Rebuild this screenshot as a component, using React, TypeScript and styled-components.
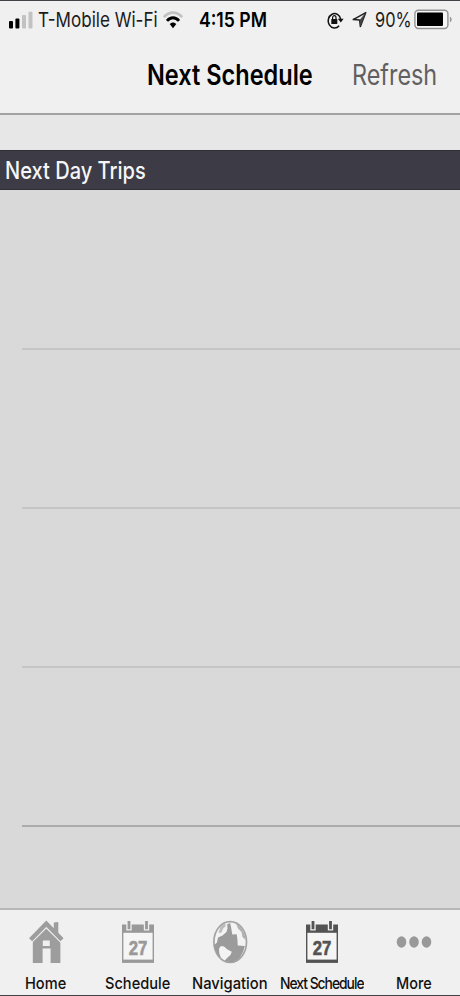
import React from 'react';
import styled, { createGlobalStyle } from 'styled-components';

const GlobalStyle = createGlobalStyle`
  * { box-sizing: border-box; }
  body { margin: 0; background: #efefef; font-family: Inter, "Noto Sans", sans-serif; color: #000; }
`;

const Screen = styled.div`
  display: flex;
  flex-direction: column;
  width: 460px;
  height: 996px;
  overflow: hidden;
  background: #f0f0f0;
  border-top: 1px solid #434145;
  border-bottom: 1px solid #434145;
`;

/* Reserves the condensed width so neighbours line up with the scaled glyphs. */
const TextSlot = styled.div<{ $width: number }>`
  flex: none;
  width: ${(p) => p.$width}px;
`;

const Condensed = styled.span<{
  $size: number;
  $scale: number;
  $weight?: number;
  $color?: string;
  $spacing?: number;
}>`
  display: block;
  width: max-content;
  margin: 0;
  white-space: nowrap;
  transform: scaleX(${(p) => p.$scale});
  transform-origin: 0 50%;
  font-size: ${(p) => p.$size}px;
  line-height: ${(p) => Math.round(p.$size * 1.2)}px;
  font-weight: ${(p) => p.$weight ?? 400};
  color: ${(p) => p.$color ?? '#000'};
  letter-spacing: ${(p) => p.$spacing ?? 0}px;
`;

const StatusBar = styled.div`
  display: flex;
  align-items: center;
  height: 37px;
  padding: 0 8px 0 9px;
`;

const StatusGroup = styled.div`
  display: flex;
  align-items: center;
  svg { display: block; flex: none; }
`;

const Carrier = styled(StatusGroup)`gap: 5px;`;

const Indicators = styled(StatusGroup)`
  gap: 8px;
  margin-left: auto;
  svg:last-child { margin-left: -4px; }
`;

const Clock = styled.div`margin-left: 16px;`;

const NavBar = styled.header`
  display: flex;
  align-items: center;
  justify-content: flex-end;
  gap: 38px;
  height: 77px;
  padding: 0 22px 2px 0;
  border-bottom: 2px solid #a2a2a2;
`;

const Spacer = styled.div`
  height: 35px;
  background: #e7e7e7;
`;

const SectionHeader = styled.div`
  display: flex;
  align-items: center;
  height: 40px;
  padding-left: 5px;
  background: #3d3b46;
  border-top: 1px solid #2f2d36;
  border-bottom: 1px solid #302e38;
`;

const List = styled.div`
  flex: 1;
  min-height: 0;
  overflow: hidden;
  padding-top: 1px;
  background: #d9d9d9;
`;

const Row = styled.div<{ $strong?: boolean }>`
  height: 159px;
  margin-left: 22px;
  border-bottom: 2px solid ${(p) => (p.$strong ? '#acacac' : '#c5c5c5')};
`;

const TabBar = styled.nav`
  display: grid;
  grid-template-columns: repeat(5, 92px);
  height: 87px;
  border-top: 2px solid #b7b7b7;
`;

const Tab = styled.div`
  display: flex;
  flex-direction: column;
  align-items: center;
  padding-top: 10px;
  svg { display: block; }
`;

const TabLabel = styled.div`margin: 9px 1px 0 0;`;

const SignalIcon = () => (
  <svg width="24" height="18" viewBox="0 0 24 18">
    <rect x="0" y="10" width="4" height="7.5" rx="1" />
    <rect x="6.4" y="7.5" width="4" height="10" rx="1" />
    <rect x="13" y="4" width="4" height="13.5" rx="1" fill="#c2c2c2" />
    <rect x="19.5" y="0.8" width="4" height="16.7" rx="1" fill="#c2c2c2" />
  </svg>
);

const WifiIcon = () => (
  <svg width="20" height="18" viewBox="0 0 20 18" fill="none">
    <path d="M.9 6.2C6 .2 14 .2 19.1 6.2" stroke="#c2c2c2" strokeWidth="2.8" />
    <path d="M4 9.8C7.4 5.7 12.6 5.7 16 9.8" stroke="#000" strokeWidth="2.8" />
    <path d="M6.7 13.1C8.6 10.8 11.4 10.8 13.3 13.1L10 17.3z" fill="#000" />
  </svg>
);

const RotationLockIcon = () => (
  <svg width="17" height="18" viewBox="0 0 17 18" fill="none">
    <path d="M12.1 14.8A6.3 7.2 0 1 1 13.7 8.4" stroke="#111" strokeWidth="1.5" />
    <path d="M10.8 7.7H16.6L13.8 11.5z" fill="#111" />
    <rect x="4.3" y="8" width="6" height="5" rx=".6" fill="#111" />
    <path d="M5.6 8V6.7a1.7 2 0 0 1 3.4 0V8" stroke="#111" strokeWidth="1.2" />
  </svg>
);

const LocationIcon = () => (
  <svg width="15" height="17" viewBox="0 0 15 17" fill="none">
    <path d="M13.8 1.6L1.2 8.6L7.6 8.9L8.4 15.6z" stroke="#222" strokeWidth="1.5" strokeLinejoin="round" />
    <path d="M13.8 1.6L7.6 8.9L8.4 15.6z" fill="#444" />
  </svg>
);

const BatteryIcon = () => (
  <svg width="38" height="21" viewBox="0 0 38 21">
    <rect x=".9" y="1.2" width="33" height="18.3" rx="3.5" fill="#f7f7f7" stroke="#929292" strokeWidth="1.4" />
    <rect x="3" y="3.6" width="26" height="13.5" rx="1" />
    <path d="M35.9 7.5q1.8 1 1.8 3t-1.8 3z" fill="#999" />
  </svg>
);

const HomeIcon = () => (
  <svg width="36" height="44" viewBox="0 0 36 44">
    <path d="M25.8 2.6L30.3 2V19H25.8z" fill="#9d9d9d" />
    <path d="M18.3 7L32.4 21V43H22.6V28.5H14.6V43H4.8V21z" fill="#9d9d9d" />
    <path d="M2.4 21L18.3 5.2L34.2 21" fill="none" stroke="#f0f0f0" strokeWidth="4.8" />
    <path d="M2.6 19.8L18.3 3.6L34 19.8" fill="none" stroke="#9d9d9d" strokeWidth="4.4" />
    <path d="M14.8 20.5H21.8V26H14.8z" fill="#f0f0f0" />
  </svg>
);

const CalendarIcon = ({ color }: { color: string }) => (
  <svg width="34" height="44" viewBox="0 0 34 44">
    <path d="M1.7 10V42H32.3V10" fill="#f5f5f5" stroke={color} strokeWidth="1.4" />
    <path d="M1 4.5H33V12.8H1z" fill={color} />
    <path d="M1 39.6H33V42.6H1z" fill={color} />
    <path d="M8 0V10.4M25.5 0V10.4" stroke="#f0f0f0" strokeWidth="5.4" />
    <path d="M8 1V9.2M25.5 1V9.2" stroke={color} strokeWidth="2.8" />
    <text x="7.8" y="34.6" fontSize="20" fontWeight="700" fontFamily="Liberation Sans, sans-serif" textLength="18.6" lengthAdjust="spacingAndGlyphs" fill={color} stroke={color} strokeWidth=".6">27</text>
  </svg>
);

const GlobeIcon = () => (
  <svg width="36" height="44" viewBox="0 0 36 44">
    <ellipse cx="18.2" cy="22" rx="16.3" ry="20.4" fill="#f3f3f3" stroke="#a4a4a4" strokeWidth="1.7" />
    <path d="M15.2 4.2L18.2 3L19.2 8L20.3 14.5L24.7 14.3L25.4 19L25.7 25.5L32.8 26Q31.5 33 28 37.5Q23 42.5 18 42.3L12.5 40.8L15.5 37.5L18.5 35L19.8 31.7L15.5 29.5L12 26.5L9 26L7 28.5L7.2 33L9 38Q3.5 34 2.3 25L5 22.5L6 17.5L10.5 15.5L14.5 12L15.5 8.5z" fill="#9b9b9b" />
    <path d="M8.5 6.5L13 3.5L13.8 6L10.8 9L9.5 12.5L6.5 13z" fill="#bdbdbd" />
    <path d="M24 3.2L29 7.5L32.6 14L33.6 20L30.5 17L29.5 12L26 8.5z" fill="#b0b0b0" />
  </svg>
);

const MoreIcon = () => (
  <svg width="36" height="44" viewBox="0 0 36 44" fill="#999">
    <ellipse cx="5.5" cy="22" rx="4.8" ry="5.8" />
    <ellipse cx="18" cy="22" rx="4.8" ry="5.8" />
    <ellipse cx="30.5" cy="22" rx="4.8" ry="5.8" />
  </svg>
);

const tabs = [
  { label: 'Home', width: 41, scale: 0.885, icon: <HomeIcon /> },
  { label: 'Schedule', width: 66, scale: 0.885, icon: <CalendarIcon color="#999" /> },
  { label: 'Navigation', width: 76, scale: 0.895, icon: <GlobeIcon /> },
  { label: 'Next Schedule', width: 83, scale: 0.84, spacing: -1.2, icon: <CalendarIcon color="#535353" /> },
  { label: 'More', width: 35, scale: 0.875, icon: <MoreIcon /> },
];

export default function App() {
  return (
    <>
      <GlobalStyle />
      <Screen>
        <StatusBar>
          <Carrier>
            <SignalIcon />
            <TextSlot $width={120}>
              <Condensed $size={20.5} $scale={0.832} $color="#1c1c1c">T-Mobile Wi-Fi</Condensed>
            </TextSlot>
            <WifiIcon />
          </Carrier>
          <Clock>
            <TextSlot $width={68}>
              <Condensed $size={20.5} $scale={0.86} $weight={600}>4:15 PM</Condensed>
            </TextSlot>
          </Clock>
          <Indicators>
            <RotationLockIcon />
            <LocationIcon />
            <TextSlot $width={35}>
              <Condensed $size={20.5} $scale={0.8} $color="#1c1c1c">90%</Condensed>
            </TextSlot>
            <BatteryIcon />
          </Indicators>
        </StatusBar>
        <NavBar>
          <TextSlot $width={167}>
            <Condensed as="h1" $size={28} $scale={0.84} $weight={600}>Next Schedule</Condensed>
          </TextSlot>
          <TextSlot $width={86}>
            <Condensed $size={28} $scale={0.835} $color="#606060">Refresh</Condensed>
          </TextSlot>
        </NavBar>
        <Spacer />
        <SectionHeader>
          <Condensed $size={24} $scale={0.835} $weight={500} $color="#f6f6f8">Next Day Trips</Condensed>
        </SectionHeader>
        <List>
          <Row />
          <Row />
          <Row />
          <Row $strong />
        </List>
        <TabBar>
          {tabs.map((t) => (
            <Tab key={t.label}>
              {t.icon}
              <TabLabel>
                <TextSlot $width={t.width}>
                  <Condensed $size={16.5} $scale={t.scale} $weight={500} $spacing={t.spacing} $color="#111">
                    {t.label}
                  </Condensed>
                </TextSlot>
              </TabLabel>
            </Tab>
          ))}
        </TabBar>
      </Screen>
    </>
  );
}
